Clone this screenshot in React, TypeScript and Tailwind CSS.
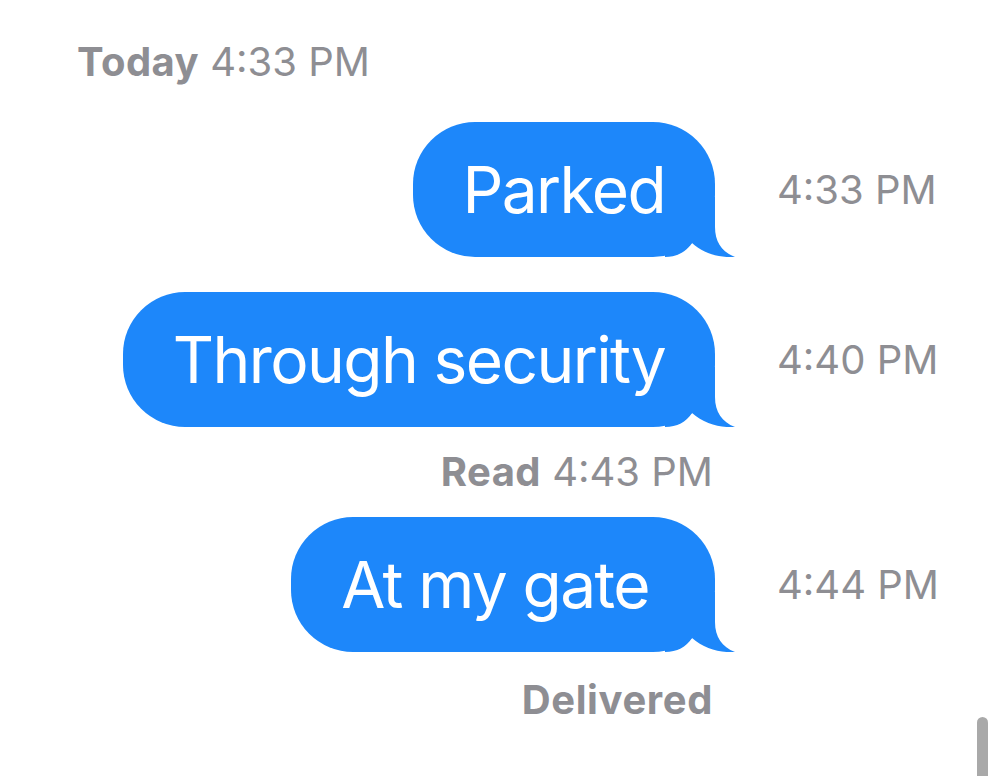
import React from "react";

const BLUE = "#1d87fa";

function Bubble({ text, pr = "pr-[50px]" }: { text: string; pr?: string }) {
  return (
    <div className={`relative h-[135px] rounded-[62px] bg-[#1d87fa] pl-[50px] ${pr} flex items-center`}>
      <span className="text-[64px] leading-none tracking-[-0.025em] text-white whitespace-nowrap">{text}</span>
      {/* tail */}
      <svg
        className="absolute bottom-0 right-[-20px]"
        width="70"
        height="60"
        viewBox="0 0 70 60"
      >
        <path
          d="M0 0 H50 V30 C50 45 57 55 70 60 C56 61 39 57 27 46 C21 55 12 60 0 60 Z"
          fill={BLUE}
        />
      </svg>
    </div>
  );
}

function Row({ text, time, pr }: { text: string; time: string; pr?: string }) {
  return (
    <div className="flex items-center">
      <div className="flex-1 flex justify-end">
        <Bubble text={text} pr={pr} />
      </div>
      <div className="w-[285px] pl-[62px] text-[40px] leading-none text-[#8e8e93] whitespace-nowrap">
        {time}
      </div>
    </div>
  );
}

export default function App() {
  return (
    <div
      className="relative w-[1000px] h-[776px] overflow-hidden bg-white"
      style={{ fontFamily: "Inter, 'Liberation Sans', sans-serif" }}
    >
      <div className="flex flex-col">
        <div className="pl-[77px] pt-[40px] text-[40px] leading-[44px] text-[#8e8e93] whitespace-nowrap">
          <span className="font-bold tracking-[0.01em]">Today</span>&nbsp;4:33 PM
        </div>
        <div className="mt-[38px]">
          <Row text="Parked" time="4:33 PM" />
        </div>
        <div className="mt-[35px]">
          <Row text="Through security" time="4:40 PM" />
        </div>
        <div className="h-[90px] pr-[287px] flex items-center justify-end text-[40px] leading-none text-[#8e8e93] whitespace-nowrap">
          <span className="font-bold tracking-[0.01em]">Read</span>&nbsp;4:43 PM
        </div>
        <Row text="At my gate" time="4:44 PM" pr="pr-[66px]" />
        <div className="pt-[28px] pr-[287px] text-right text-[40px] leading-none font-bold tracking-[0.015em] text-[#8e8e93]">
          Delivered
        </div>
      </div>
      {/* scroll indicator */}
      <div className="absolute left-[977px] top-[717px] w-[11px] h-[80px] rounded-full bg-[#a9a9a9]" />
    </div>
  );
}
